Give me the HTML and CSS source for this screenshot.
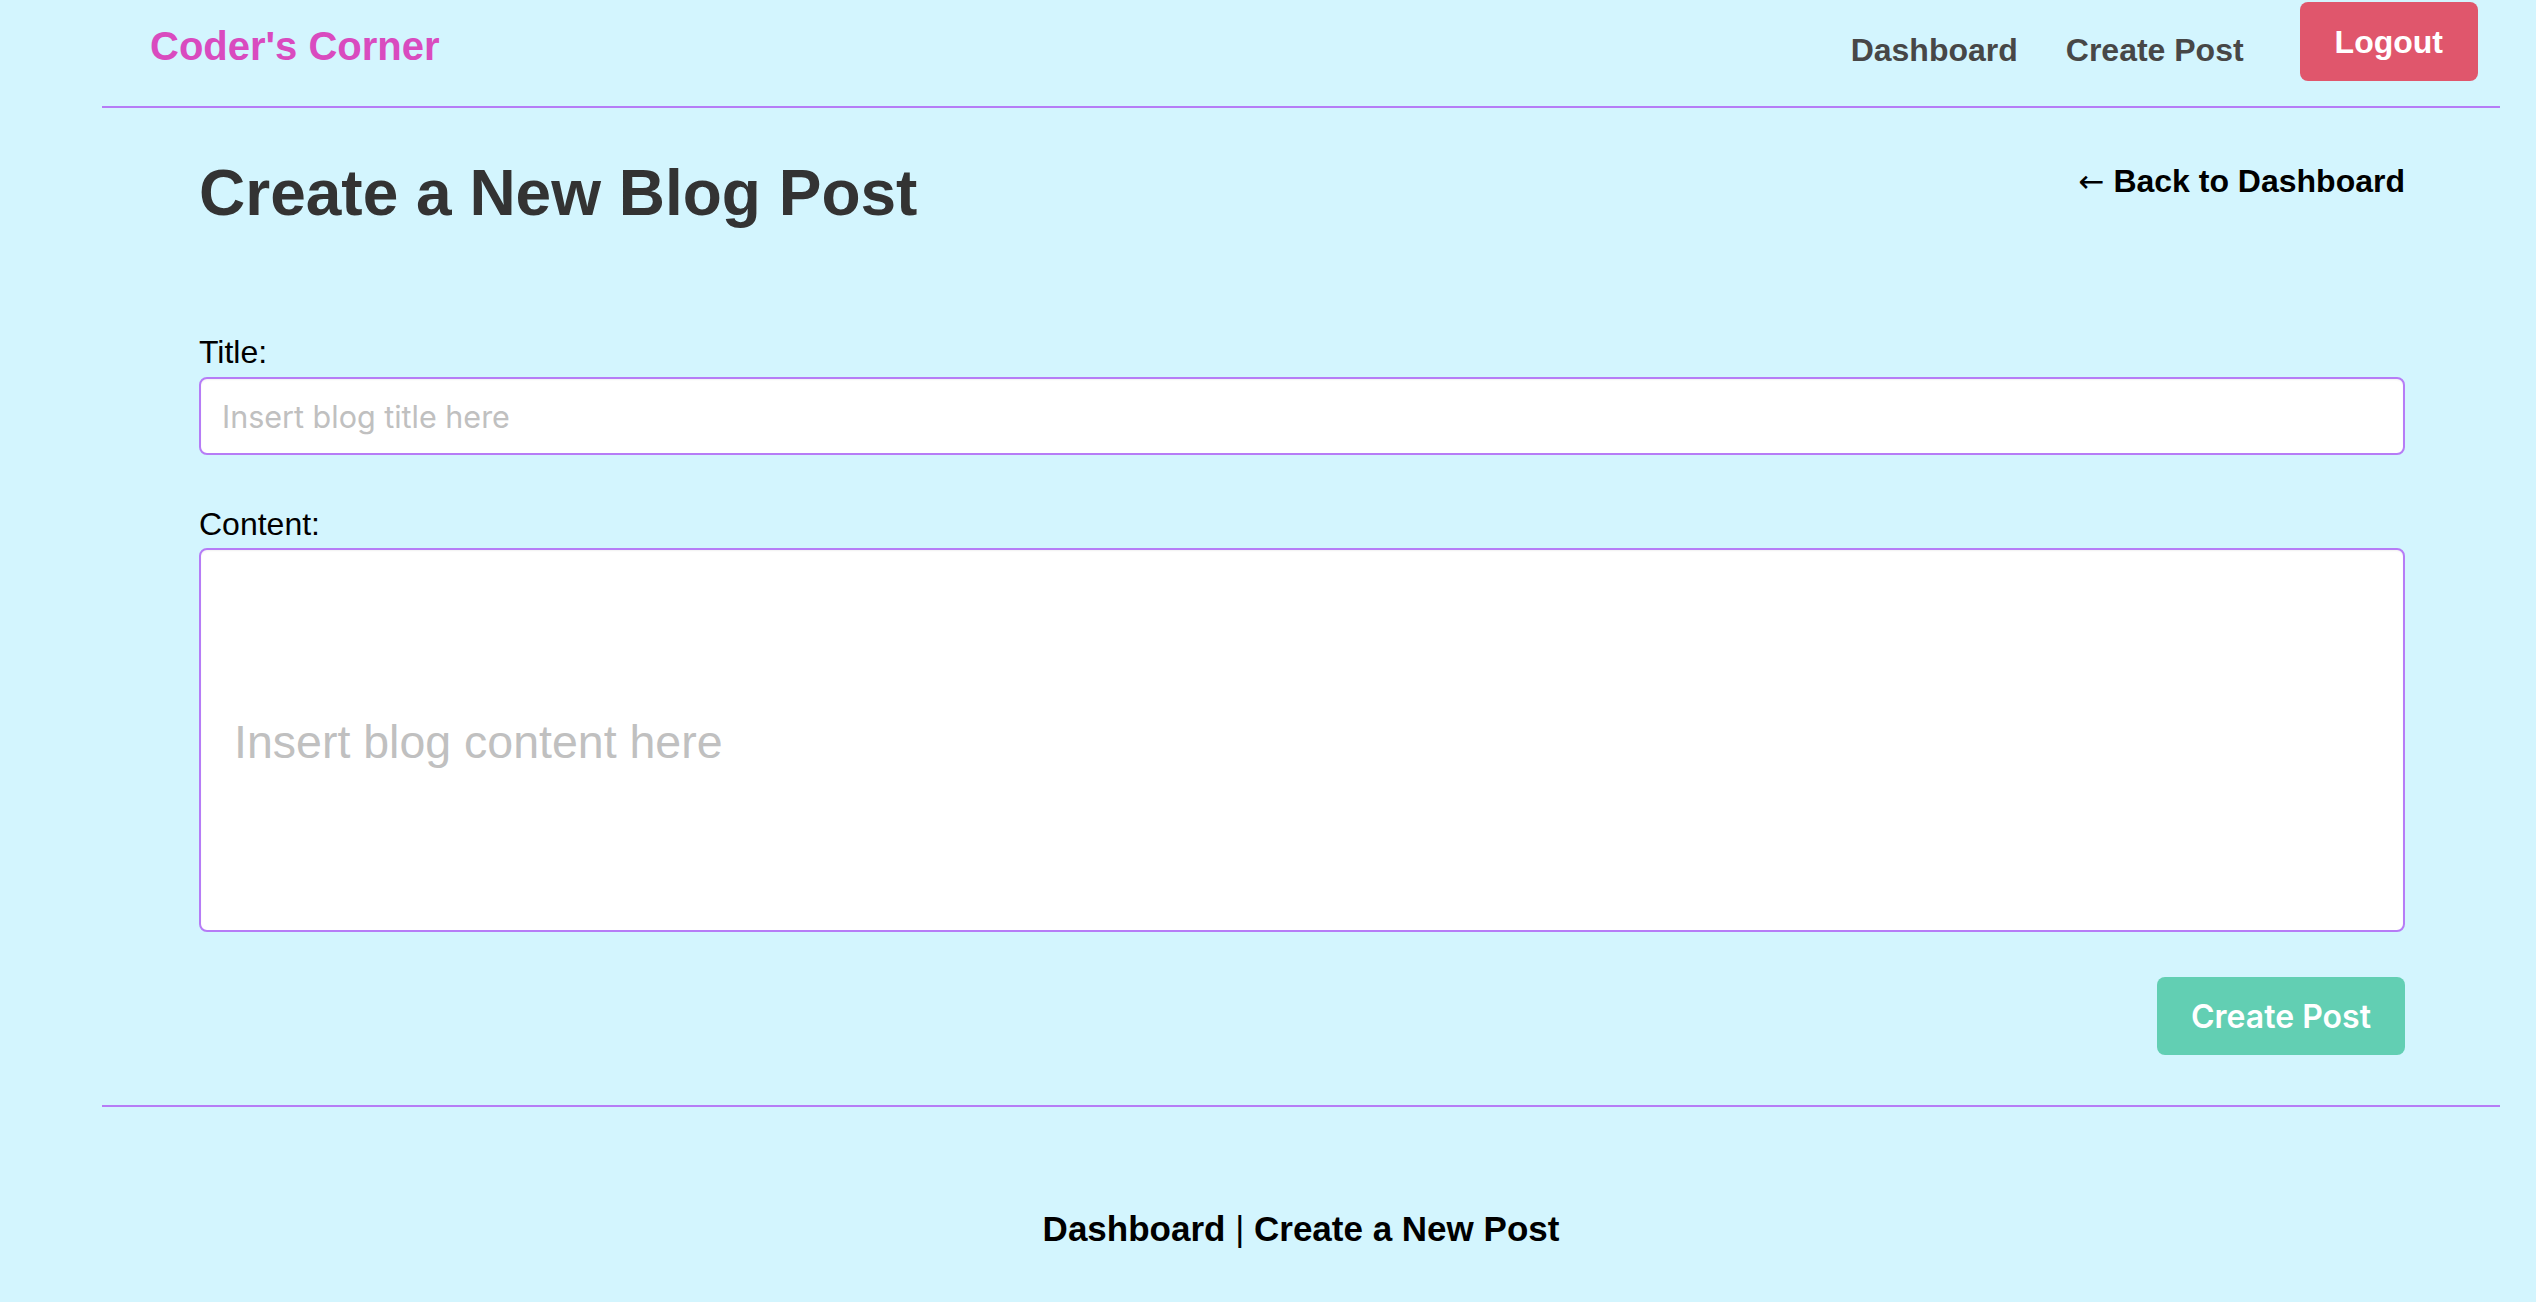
FILE: index.html
```html
<!DOCTYPE html>
<html lang="en">
<head>
<meta charset="utf-8">
<title>Coder's Corner - Create a New Blog Post</title>
<link rel="stylesheet" href="styles.css">
</head>
<body>
<div class="page">
  <header class="site-header">
    <a class="logo" href="#">Coder's Corner</a>
    <nav class="nav">
      <a class="nav-link" href="#">Dashboard</a>
      <a class="nav-link" href="#">Create Post</a>
      <button class="logout" type="button">Logout</button>
    </nav>
  </header>
  <main class="main">
    <div class="title-row">
      <h1 class="page-title">Create a New Blog Post</h1>
      <a class="back-link" href="#"><span class="arrow">←</span> Back to Dashboard</a>
    </div>
    <form class="post-form">
      <label class="field-label" for="title">Title:</label>
      <input class="title-input" id="title" type="text" placeholder="Insert blog title here">
      <label class="field-label content-label" for="content">Content:</label>
      <textarea class="content-input" id="content" placeholder="Insert blog content here"></textarea>
      <div class="actions">
        <button class="submit" type="submit">Create Post</button>
      </div>
    </form>
  </main>
  <footer class="site-footer">
    <a class="footer-link" href="#">Dashboard</a> <span class="sep">|</span> <a class="footer-link" href="#">Create a New Post</a>
  </footer>
</div>
</body>
</html>
```
FILE: styles.css
```css
html, body {
  margin: 0;
  padding: 0;
  background: #d3f5fe;
}
body {
  font-family: "Liberation Sans", Arial, Helvetica, sans-serif;
  color: #000;
}
a {
  text-decoration: none;
}
.page {
  margin-left: 102px;
  width: 2398px;
}
.site-header {
  display: flex;
  justify-content: space-between;
  align-items: flex-start;
  height: 106px;
  padding: 0 22px 0 48px;
  border-bottom: 2px solid #b67cf6;
}
.logo {
  margin-top: 26px;
  font-size: 40px;
  line-height: 1;
  font-weight: 700;
  color: #d94bbf;
}
.nav {
  display: flex;
  align-items: flex-start;
  gap: 48px;
}
.nav-link {
  margin-top: 34px;
  font-size: 32px;
  line-height: 1;
  font-weight: 700;
  color: #474747;
}
.logout {
  margin-top: 2px;
  margin-left: 8px;
  padding: 24px 35px 23px;
  border: none;
  border-radius: 8px;
  background: #e0566c;
  color: #fff;
  font-family: "Liberation Sans", Arial, sans-serif;
  font-size: 32px;
  line-height: 1;
  font-weight: 700;
}
.main {
  padding: 53px 95px 0 97px;
}
.title-row {
  display: flex;
  justify-content: space-between;
  align-items: flex-start;
}
.page-title {
  margin: 0;
  font-size: 64px;
  line-height: 1;
  font-weight: 700;
  color: #333;
}
.back-link {
  margin-top: 4px;
  font-size: 32px;
  line-height: 1;
  font-weight: 700;
  color: #000;
}
.arrow {
  font-family: "DejaVu Sans", sans-serif;
  font-weight: 400;
  font-size: 31px;
}
.post-form {
  display: flex;
  flex-direction: column;
  margin-top: 111px;
}
.field-label {
  font-size: 32px;
  line-height: 1;
  margin-bottom: 9px;
}
.content-label {
  margin-top: 53px;
  margin-bottom: 8px;
}
.title-input,
.content-input {
  box-sizing: border-box;
  width: 100%;
  border: 2px solid #b67cf6;
  border-radius: 8px;
  background: #fff;
  box-shadow: inset 0 1px 2px rgba(0,0,0,0.06);
  outline: none;
}
.title-input {
  height: 78px;
  padding: 0 21px;
  font-family: Inter, "Noto Sans", sans-serif;
  font-size: 30.5px;
}
.content-input {
  height: 384px;
  padding: 165px 33px 0;
  resize: none;
  font-family: "Liberation Sans", Arial, sans-serif;
  font-size: 46.5px;
  line-height: 54px;
}
.title-input::placeholder,
.content-input::placeholder {
  color: #c0c0c0;
}
.actions {
  display: flex;
  justify-content: flex-end;
  margin-top: 45px;
  padding-bottom: 50px;
  border-bottom: 2px solid #b67cf6;
  margin-left: -97px;
  margin-right: -95px;
  padding-right: 95px;
}
.submit {
  width: 248px;
  height: 78px;
  border: none;
  border-radius: 8px;
  background: #62cfb3;
  color: #fff;
  font-family: Inter, "Noto Sans", sans-serif;
  font-size: 32px;
  font-weight: 600;
}
.site-footer {
  padding-top: 104px;
  padding-bottom: 40px;
  text-align: center;
  font-size: 35px;
  line-height: 1;
  font-weight: 700;
  color: #000;
}
.footer-link {
  color: #000;
}
.sep {
  font-weight: 400;
}
```
